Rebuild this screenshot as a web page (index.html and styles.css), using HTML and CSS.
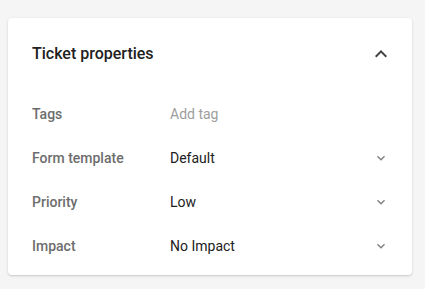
FILE: index.html
```html
<!DOCTYPE html>
<html lang="en">
<head>
	<meta charset="UTF-8">
	<link rel="stylesheet" href="styles.css">
</head>
<body>
<div class="card">
	<div class="card-head">
		<span class="title">Ticket properties</span>
		<svg class="icon-up" viewBox="0 0 24 24" width="24" height="24"><path d="M12 8l-6 6 1.41 1.41L12 10.83l4.59 4.58L18 14z"/></svg>
	</div>
	<div class="row">
		<span class="label">Tags</span>
		<span class="value empty">Add tag</span>
	</div>
	<div class="row">
		<span class="label">Form template</span>
		<span class="value">Default</span>
		<svg class="icon-down" viewBox="0 0 24 24" width="16" height="16"><path d="M16.59 8.59L12 13.17 7.41 8.59 6 10l6 6 6-6z"/></svg>
	</div>
	<div class="row">
		<span class="label">Priority</span>
		<span class="value">Low</span>
		<svg class="icon-down" viewBox="0 0 24 24" width="16" height="16"><path d="M16.59 8.59L12 13.17 7.41 8.59 6 10l6 6 6-6z"/></svg>
	</div>
	<div class="row">
		<span class="label">Impact</span>
		<span class="value">No Impact</span>
		<svg class="icon-down" viewBox="0 0 24 24" width="16" height="16"><path d="M16.59 8.59L12 13.17 7.41 8.59 6 10l6 6 6-6z"/></svg>
	</div>
</div>
</body>
</html>
```
FILE: styles.css
```css
html, body {
	margin: 0;
	background-color: #f5f5f5;
	font-family: Roboto, "Liberation Sans", sans-serif;
}
.card {
	margin: 18px 13px 14px 8px;
	padding: 0 0 7px 24px;
	background-color: #ffffff;
	border-radius: 4px;
	box-shadow: 0 1px 3px rgba(0, 0, 0, 0.14), 0 1px 1px rgba(0, 0, 0, 0.06);
}
.card-head {
	display: flex;
	align-items: center;
	height: 72px;
	padding-right: 19px;
	margin-bottom: 2px;
}
.title {
	flex: 1;
	font-size: 16px;
	line-height: 24px;
	font-weight: 500;
	color: #212121;
}
.icon-up {
	fill: #424242;
}
.row {
	display: flex;
	align-items: center;
	height: 44px;
	padding-right: 23px;
	font-size: 14px;
	line-height: 20px;
}
.label {
	width: 138px;
	font-weight: 500;
	color: #6d6d6d;
}
.value {
	flex: 1;
	color: #212121;
}
.value.empty {
	color: #9e9e9e;
}
.icon-down {
	fill: #808080;
}
```
